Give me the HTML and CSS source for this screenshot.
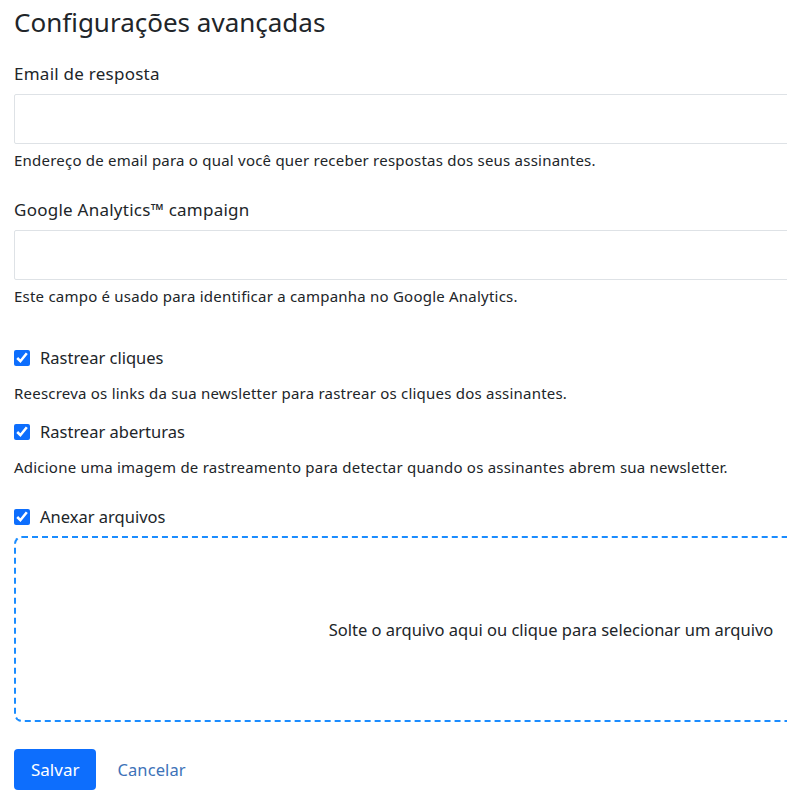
FILE: index.html
```html
<!DOCTYPE html>
<html lang="pt-BR">
<head>
    <meta charset="UTF-8">
    <meta name="viewport" content="width=device-width, initial-scale=1.0">
    <title>Configurações avançadas</title>
    <link rel="stylesheet" href="styles.css">
</head>
<body>
    <form class="settings">
        <h3 class="title">Configurações avançadas</h3>

        <div class="field">
            <label for="reply-email" class="label">Email de resposta</label>
            <input type="email" id="reply-email" class="input">
            <p class="help">Endereço de email para o qual você quer receber respostas dos seus assinantes.</p>
        </div>

        <div class="field">
            <label for="ga-campaign" class="label">Google Analytics™ campaign</label>
            <input type="text" id="ga-campaign" class="input">
            <p class="help">Este campo é usado para identificar a campanha no Google Analytics.</p>
        </div>

        <div class="checks">
            <label class="check">
                <input type="checkbox" checked>
                <span>Rastrear cliques</span>
            </label>
            <p class="help">Reescreva os links da sua newsletter para rastrear os cliques dos assinantes.</p>

            <label class="check">
                <input type="checkbox" checked>
                <span>Rastrear aberturas</span>
            </label>
            <p class="help">Adicione uma imagem de rastreamento para detectar quando os assinantes abrem sua newsletter.</p>

            <label class="check check-attach">
                <input type="checkbox" checked>
                <span>Anexar arquivos</span>
            </label>
            <div class="dropzone">
                Solte o arquivo aqui ou clique para selecionar um arquivo
            </div>
        </div>

        <div class="actions">
            <button type="submit" class="btn">Salvar</button>
            <a href="#" class="link">Cancelar</a>
        </div>
    </form>
</body>
</html>
```

FILE: styles.css
```css
/* Reset */
* {
    margin: 0;
    padding: 0;
    box-sizing: border-box;
}

body {
    font-family: "Noto Sans", sans-serif;
    font-size: 15px;
    color: #212529;
    background: #ffffff;
    overflow: hidden;
}

/* Form wrapper (wider than the window, cut at the right) */
.settings {
    width: 1074px;
    margin-left: 14px;
    padding-top: 2px;
}

.title {
    font-size: 26px;
    font-weight: 400;
    line-height: 40px;
    margin-bottom: 20px;
}

/* Text fields */
.field {
    margin-bottom: 27px;
}

.label {
    display: block;
    font-size: 17px;
    letter-spacing: 0.25px;
    line-height: 24px;
    margin-bottom: 8px;
}

.input {
    display: block;
    width: 100%;
    height: 50px;
    border: 1px solid #dee2e6;
    border-radius: 2px;
    font-size: 16px;
    padding: 0 12px;
}

.help {
    font-size: 15px;
    letter-spacing: 0.22px;
    line-height: 21px;
    margin-top: 6px;
}

/* Checkboxes */
.checks {
    padding-top: 12px;
}

.check {
    display: flex;
    align-items: center;
    gap: 10px;
    font-size: 16.5px;
    line-height: 24px;
    margin-bottom: 13px;
}

.check input {
    width: 16px;
    height: 16px;
    accent-color: #0d6efd;
}

.checks .help {
    margin-top: 0;
    margin-bottom: 16px;
}

.check-attach {
    margin-top: 27px;
    margin-bottom: 7px;
}

/* File drop area */
.dropzone {
    height: 186px;
    border: 2px dashed #1a8cff;
    border-radius: 8px;
    display: flex;
    align-items: center;
    justify-content: center;
    font-size: 16.5px;
}

/* Buttons */
.actions {
    display: flex;
    align-items: center;
    gap: 21px;
    margin-top: 27px;
}

.btn {
    font-family: inherit;
    font-size: 17px;
    color: #ffffff;
    background-color: #0d6efd;
    border: none;
    border-radius: 4px;
    height: 41px;
    padding: 0 17px;
    cursor: pointer;
}

.link {
    color: #3d72b8;
    font-size: 16.5px;
    letter-spacing: 0.1px;
    text-decoration: none;
}
```
